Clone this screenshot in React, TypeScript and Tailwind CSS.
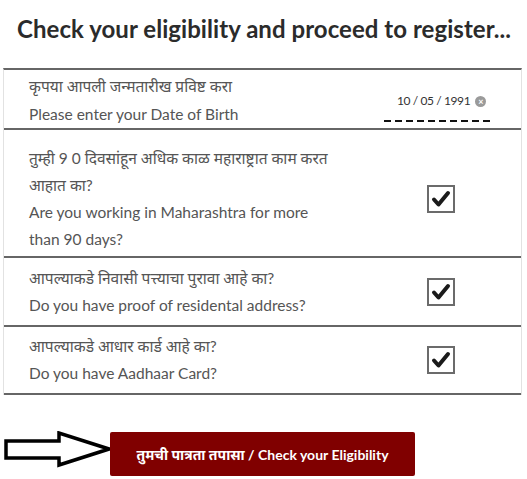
const rows = [
  {
    mr: ['तुम्ही 9 0 दिवसांहून अधिक काळ महाराष्ट्रात काम करत', 'आहात का?'],
    en: ['Are you working in Maharashtra for more', 'than 90 days?'],
    cls: 'h-[128px] pt-[12px]',
  },
  {
    mr: ['आपल्याकडे निवासी पत्त्याचा पुरावा आहे का?'],
    en: ['Do you have proof of residental address?'],
    cls: 'h-[69px] pt-[1px]',
  },
  {
    mr: ['आपल्याकडे आधार कार्ड आहे का?'],
    en: ['Do you have Aadhaar Card?'],
    cls: 'h-[68px]',
  },
]

function CheckBox() {
  return (
    <div className="w-[28px] h-[28px] border-2 border-[#6b6b6b] bg-white flex items-center justify-center">
      <svg width="20" height="18" viewBox="0 0 20 18">
        <path d="M3 9.5 L7.5 14.5 L17 3" fill="none" stroke="#1a1a1a" strokeWidth="4" strokeLinecap="round" strokeLinejoin="round" />
      </svg>
    </div>
  )
}

function Arrow() {
  return (
    <svg width="108" height="38" viewBox="0 0 108 38" className="shrink-0 -mt-[8px]">
      <path
        d="M2 10 L55 10 L55 2 L105 18 L55 34 L55 27 L2 27 Z"
        fill="white"
        stroke="black"
        strokeWidth="3.5"
        strokeLinejoin="miter"
      />
    </svg>
  )
}

export default function App() {
  return (
    <div className="w-[527px] h-[479px] bg-white font-['Lato','Noto_Sans',sans-serif] text-[#555]">
      <h1 className="pt-[14px] pl-[17px] text-[24px] leading-[30px] font-bold text-[#2b2b2b] tracking-[0.05px] whitespace-nowrap">
        Check your eligibility and proceed to register...
      </h1>

      <div className="mt-[24px] ml-[3px] w-[519px] border-x border-[#e2e2e2] border-t-2 border-t-[#666]">
        <div className="flex items-center border-b-2 border-[#666] h-[60px]">
          <div className="flex-1 pl-[25px] text-[15.5px] leading-[28px] pt-[1px]">
            <div>कृपया आपली जन्मतारीख प्रविष्ट करा</div>
            <div>Please enter your Date of Birth</div>
          </div>
          <div className="w-[137px] self-start pt-[23px] flex flex-col items-start">
            <div className="flex items-center gap-[5px] pl-[13px] text-[12px] leading-[16px] text-[#333] tracking-[-0.4px]">
              <span>10 / 05 / 1991</span>
              <span className="w-[11px] h-[11px] rounded-full bg-[#9a9a9a] text-white text-[9px] leading-[11px] flex items-center justify-center font-bold">×</span>
            </div>
            <div className="mt-[11px] w-[110px] h-[2px] bg-[repeating-linear-gradient(90deg,#111_0_7px,transparent_7px_11px)]" />
          </div>
        </div>

        {rows.map((row, i) => (
          <div key={i} className={`flex items-center border-b-2 border-[#666] ${row.cls}`}>
            <div className="flex-1 pl-[25px] text-[15.5px] leading-[27px]">
              {row.mr.map((l) => (
                <div key={l}>{l}</div>
              ))}
              {row.en.map((l) => (
                <div key={l}>{l}</div>
              ))}
            </div>
            <div className="w-[94px]">
              <CheckBox />
            </div>
          </div>
        ))}
      </div>

      <div className="mt-[37px] flex items-center pl-[4px]">
        <Arrow />
        <button className="-ml-[2px] w-[305px] h-[44px] bg-[#800000] text-white text-[14px] font-bold rounded-[2px]">
          तुमची पात्रता तपासा / Check your Eligibility
        </button>
      </div>
    </div>
  )
}
